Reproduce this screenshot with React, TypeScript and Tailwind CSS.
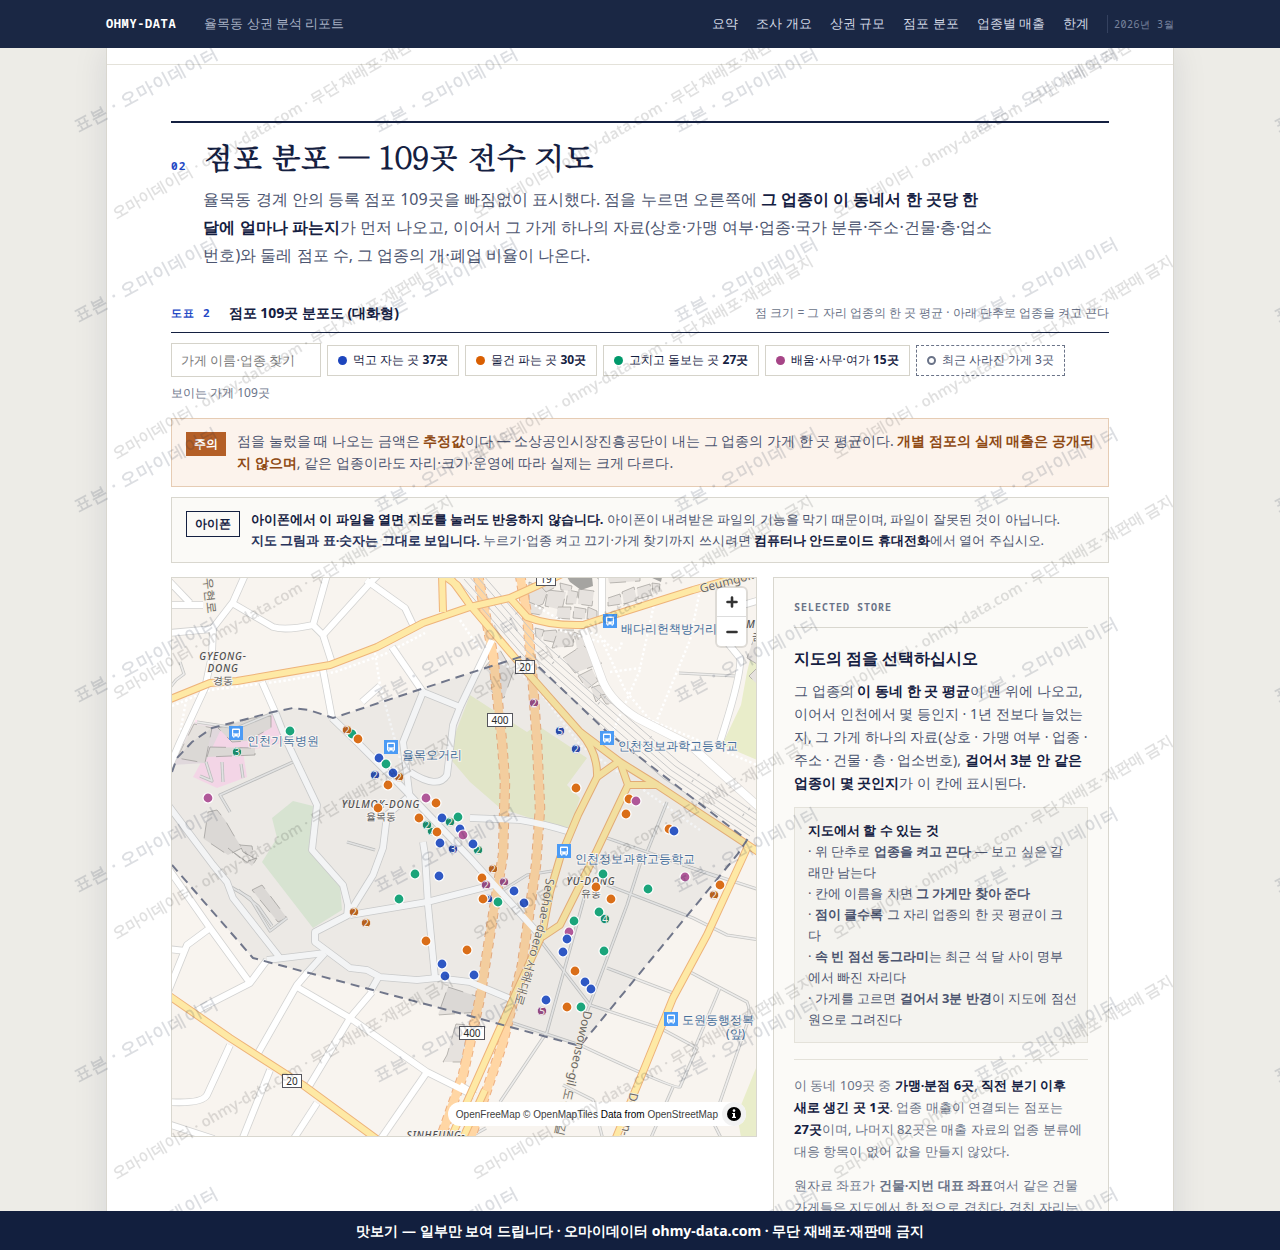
import React, { useState } from "react";

const sans = "font-['Noto_Sans',sans-serif]";
const serif = "font-['Batang','Noto_Serif',serif]";
const mono = "font-['Noto_Sans_Mono','DejaVu_Sans_Mono',monospace]";

const nav = [
  { label: "요약", href: "#summary" },
  { label: "조사 개요", href: "#overview" },
  { label: "상권 규모", href: "#scale" },
  { label: "점포 분포", href: "#map" },
  { label: "업종별 매출", href: "#sales" },
  { label: "한계", href: "#limits" },
];

const groups = [
  { key: "b", label: "먹고 자는 곳", count: "37곳", dot: "bg-[#1d45bd]" },
  { key: "o", label: "물건 파는 곳", count: "30곳", dot: "bg-[#d95f02]" },
  { key: "g", label: "고치고 돌보는 곳", count: "27곳", dot: "bg-[#00996b]" },
  { key: "p", label: "배움·사무·여가", count: "15곳", dot: "bg-[#a64587]" },
];

const dotColor: Record<string, string> = {
  b: "#2f58c4",
  o: "#da6e18",
  g: "#1ba57b",
  p: "#b05899",
};

const clusterColor: Record<string, string> = {
  b: "#2b4aa8",
  o: "#b7611d",
  g: "#1a8a68",
  p: "#934a80",
};

// [group, x, y, stores at the same spot]
const stores: [string, number, number, number?][] = [
  ["g", 352, 734], ["o", 347, 730, 2], ["o", 358, 739], ["g", 290, 731], ["g", 237, 752, 3],
  ["b", 379, 758], ["g", 386, 764], ["o", 399, 777, 2], ["b", 393, 773], ["b", 375, 775, 2],
  ["o", 388, 785], ["p", 208, 798], ["p", 426, 798], ["o", 436, 803], ["o", 378, 808],
  ["o", 419, 818], ["b", 442, 818], ["g", 458, 817], ["g", 450, 822, 2], ["g", 432, 831, 2],
  ["g", 427, 825, 2], ["o", 437, 832], ["b", 460, 829], ["p", 463, 835], ["b", 440, 843],
  ["b", 453, 849, 3], ["p", 534, 703, 2], ["b", 560, 731, 5], ["b", 576, 749, 2], ["o", 576, 788],
  ["o", 629, 799], ["p", 636, 801], ["o", 626, 814], ["o", 669, 829], ["b", 674, 831],
  ["g", 478, 850, 2], ["b", 473, 844], ["g", 415, 874], ["b", 439, 876], ["g", 399, 899],
  ["o", 354, 912, 2], ["o", 366, 923, 2], ["o", 426, 941], ["o", 467, 950], ["b", 442, 964],
  ["b", 445, 976], ["o", 493, 869, 2], ["o", 482, 878], ["p", 486, 885, 2], ["p", 504, 882, 2],
  ["b", 514, 891], ["b", 488, 899, 2], ["o", 483, 899], ["g", 498, 902], ["b", 524, 903],
  ["b", 474, 975], ["g", 603, 874], ["o", 596, 887], ["o", 611, 899], ["g", 599, 912],
  ["g", 605, 919, 4], ["g", 648, 889], ["p", 685, 877], ["o", 720, 885], ["o", 714, 895, 2],
  ["g", 574, 921], ["p", 569, 932], ["b", 567, 939], ["b", 563, 952], ["g", 604, 951],
  ["o", 575, 971], ["b", 585, 982], ["b", 591, 989], ["b", 546, 1000], ["p", 542, 1011, 5],
  ["o", 567, 1007], ["g", 581, 1007],
];

const boundary =
  "M172 772 L177 758 L192 742 L212 728 L273 712 L293 708 L309 710 L333 718 L470 673 L523 656 L540 668 L607 732 L747 840 L737 855 L580 1046 L470 1016 L253 958 L172 865";

const whiteRoads = [
  "M245 575 L233 602 L213 628 L212 655 L205 688 L180 742 L168 770",
  "M232 603 L273 627 Q285 631 313 625 L327 575",
  "M313 625 L323 635 L332 663",
  "M323 635 L370 583 L378 575",
  "M366 580 L405 608 L414 627",
  "M168 605 L203 605",
  "M168 580 L190 603",
  "M168 633 L213 629",
  "M323 670 L332 718",
  "M262 682 L276 714",
  "M392 647 L423 692",
  "M362 702 L380 686",
  "M168 868 L210 928 L250 983",
  "M210 928 L187 945 L168 992",
  "M168 949 L186 951",
  "M267 960 L250 983 L207 1005 L193 1013",
  "M308 972 L297 985 L257 1055",
  "M297 987 L350 1018 L427 1072 L475 1096",
  "M372 992 L350 1018 L308 1088",
  "M317 1103 L293 1140",
  "M427 1072 L380 1140",
  "M230 1045 L207 1095 Q202 1104 168 1102",
  "M270 1070 L242 1140",
  "M168 1124 L214 1139",
  "M602 575 L602 620",
  "M727 642 L740 658 Q742 674 720 742",
  "M719 612 L760 600",
  "M460 1085 L468 1090",
];

const innerRoads = [
  "M332 718 L357 742 L403 788 L470 858 L537 932",
  "M276 714 L287 742 L317 805 L312 850 L343 885 L348 905 L347 917",
  "M423 692 L460 707 L492 640",
  "M460 707 L453 725 L447 775 Q438 790 410 772",
  "M423 692 L403 742 L410 800",
  "M407 798 L387 815 L383 848 L373 875 L350 912",
  "M168 805 L213 865 L227 882 L233 898 L280 958",
  "M350 915 L427 902 L493 885",
  "M423 842 L425 855 L428 905 L435 978",
  "M348 915 L315 932 L315 942 L350 968 L367 970 L380 977 L417 980 L437 978 L470 982 L513 1000",
  "M325 953 L267 960",
  "M325 953 L306 974",
  "M378 978 L370 992",
  "M470 818 L520 820 Q545 824 570 832",
];

const yellowRoads = [
  "M168 700 L210 683 L237 681 L330 665 L377 647 L423 623 L470 607 L510 598 L543 583 L562 574",
  "M510 598 L527 617 Q550 626 583 625 L620 613 L693 590 L760 571",
  "M436 570 L457 585 L470 605 L527 672 L580 732 L620 762 L657 785 L760 853",
  "M442 575 L443 612",
  "M448 575 L468 602",
  "M580 732 Q598 752 597 777 L578 815 L560 858 L550 892 L542 935 L500 1028 L450 1140",
  "M620 762 L628 785 L590 865 L560 925 L542 937",
  "M628 785 L657 785",
  "M597 777 L618 762",
  "M747 848 L743 857 L707 935 L673 998 L647 1062 L615 1140",
  "M168 995 L230 1038 L303 1085 L378 1140",
  "M485 1090 L462 1140",
];

const tunnels = [
  "M478 575 L493 655 L502 742 L505 782 L503 855 L493 915 L480 998 L463 1075 L440 1140",
  "M520 575 L527 615 L533 685 L537 742 L540 808 L536 865 L522 965 L503 1042 L470 1140",
];

const lanes = [
  "M585 895 L547 1032 L500 1102",
  "M643 855 L627 905 L587 1012",
  "M540 940 L590 1005 L660 1028 L697 1048 L680 1087 Q676 1090 580 1045 L510 1022",
  "M607 885 L693 918 L727 935 L760 940",
  "M683 865 L760 890",
  "M607 968 L673 993",
  "M690 972 L747 1002 Q752 1012 745 1030 L713 1122 L722 1140",
  "M720 988 L693 1052",
  "M673 1087 L650 1140",
  "M563 1085 L593 1100 L603 1140",
  "M607 838 L647 852 L667 802",
  "M647 852 L720 878",
  "M293 762 L220 795 L230 812",
  "M197 722 L237 728 L273 713",
  "M168 690 L176 680 L184 674 L180 662",
  "M231 887 L250 898 L270 931 L287 918",
  "M238 890 L258 906 L272 926",
  "M347 842 L375 850",
  "M500 892 L527 875 L552 871",
  "M679 673 L735 676",
  "M470 1137 L486 1128",
  "M200 776 L212 781 L206 762",
  "M223 782 L222 762",
  "M243 778 L241 764",
];

const paths = [
  "M172 706 L210 690 L283 681 L335 672 L385 654 L425 633",
  "M375 653 L380 685 L390 722 L410 795",
  "M604 640 Q620 660 622 640 M610 672 L640 668 L655 600 M640 670 L610 738",
  "M700 590 L690 640 L655 725",
  "M535 605 Q560 622 600 636 L625 690 L650 720 L757 765",
  "M520 665 L580 745 L700 830",
  "M460 620 L480 650 L530 680",
  "M188 690 L176 755",
  "M560 630 L600 642",
];

const avenue = "M583 628 L603 682 Q612 702 637 718 L690 745 L760 808";

const rail = "M470 573 L533 645 L620 722 L673 768 L760 826";

const buildings = [
  "529,582 548,590 543,604 529,610",
  "548,590 566,592 562,610 545,606",
  "568,590 578,592 576,604 566,604",
  "579,589 594,591 592,606 578,604",
  "529,602 544,608 541,615 529,613",
  "558,607 571,607 570,619 556,618",
  "574,607 586,609 585,619 573,618",
  "588,607 597,611 597,618 587,619",
  "538,583 550,579 556,587 546,592",
  "560,583 572,586 571,591 561,590",
  "608,577 640,577 640,581 609,583",
  "608,598 620,594 622,604 608,606",
  "622,592 634,587 637,600 624,604",
  "637,588 650,584 652,595 638,599",
  "652,583 660,584 659,592 653,594",
  "535,628 544,630 541,640 536,637",
  "544,631 556,630 560,640 558,643 543,640",
  "558,630 574,630 573,646 552,648",
  "574,632 583,636 593,646 577,649",
  "563,658 583,645 602,663 575,673",
  "578,676 592,669 598,681 587,689",
  "591,688 599,685 606,692 596,702",
  "600,695 608,694 614,704 606,704",
  "484,668 500,650 513,672 504,698 490,691 497,680",
  "757,630 747,658 757,664",
  "757,668 749,676 757,684",
  "177,758 194,724 212,728 205,763",
  "218,728 252,718 271,716 271,728 247,741 232,742",
  "210,747 255,748 255,755 207,757",
  "208,812 217,810 225,820 233,834 242,848 228,855 204,839",
  "240,845 252,846 254,858 243,852",
  "228,848 245,862 257,858 252,866",
  "252,890 262,885 287,918 278,922",
  "448,987 482,998 480,1012 438,1015",
  "456,1024 447,1055 443,1062 462,1062 468,1025",
];

const darkBuildings = [
  "567,577 592,577 593,586 581,590 570,582",
  "596,577 603,577 602,583",
  "650,577 662,577 661,582",
];

const stops = [
  { x: 236, y: 733, label: "인천기독병원", lx: 247, ly: 745 },
  { x: 391, y: 747, label: "율목오거리", lx: 402, ly: 759 },
  { x: 610, y: 621, label: "배다리헌책방거리", lx: 621, ly: 633 },
  { x: 607, y: 738, label: "인천정보과학고등학교", lx: 618, ly: 750 },
  { x: 564, y: 851, label: "인천정보과학고등학교", lx: 575, ly: 863 },
  { x: 671, y: 1019, label: "도원동행정복", lx: 682, ly: 1024 },
];

const shields = [
  { x: 546, y: 579, w: 19, label: "19" },
  { x: 525, y: 667, w: 19, label: "20" },
  { x: 500, y: 720, w: 25, label: "400" },
  { x: 472, y: 1033, w: 25, label: "400" },
  { x: 292, y: 1081, w: 19, label: "20" },
];

function Strokes({ list, color, width, dash }: { list: string[]; color: string; width: number; dash?: string }) {
  return (
    <g fill="none" stroke={color} strokeWidth={width} strokeDasharray={dash} strokeLinejoin="round">
      {list.map((d) => (
        <path key={d} d={d} />
      ))}
    </g>
  );
}

function StoreMap() {
  return (
    <svg
      viewBox="172 578 584 558"
      preserveAspectRatio="xMidYMid slice"
      className={`block h-[558px] w-full bg-[#f8f4ef] ${sans}`}
      role="img"
      aria-label="점포 109곳 분포도"
    >
      <g fill="#e9edca">
        <polygon points="757,632 747,672 741,705 722,745 757,760" />
        <polygon points="756,1068 737,1115 741,1137 757,1137" />
      </g>
      <polygon fill="#ecf0d0" points="470,695 447,755 470,782 500,808 530,818 570,828 580,798 567,785 587,758 537,725 527,732" />
      <polygon fill="#e2eeda" points="272,818 293,801 313,806 310,848 340,885 342,910 313,928 262,862 277,838" />
      <polygon fill="#ffdff0" points="195,720 225,727 275,713 286,742 243,752 247,777 217,788 193,777 204,757" />
      <polygon fill="#ebe2e5" points="172,765 194,722 222,727 205,763" />

      <g fill="#e6e2de" stroke="#a19e9a" strokeWidth="0.7" strokeDasharray="16 9">
        {buildings.map((p) => (
          <polygon key={p} points={p} />
        ))}
      </g>
      <g fill="#a5a4a1">
        {darkBuildings.map((p) => (
          <polygon key={p} points={p} />
        ))}
      </g>

      <Strokes list={paths} color="#ffffff" width={2.4} dash="2.4 2.4" />
      <Strokes list={lanes} color="#c6c6c4" width={3.2} />
      <Strokes list={lanes} color="#edeceb" width={1.6} />

      <Strokes list={[avenue]} color="#dddbd8" width={9} />
      <Strokes list={[avenue]} color="#ffffff" width={7.6} />
      <Strokes list={[...whiteRoads, ...innerRoads]} color="#d3d3d2" width={7.6} />
      <Strokes list={tunnels} color="#eeb183" width={10.5} dash="6 4" />
      <Strokes list={tunnels} color="#ffd6a4" width={8.5} />
      <Strokes list={innerRoads} color="#ffffff" width={6} />
      <Strokes list={whiteRoads} color="#ffffff" width={6} />

      <g fill="none" stroke="#c9c9c9" strokeWidth="1">
        {[-10, -6, -2, 2, 6].map((dx) => (
          <path key={dx} d={rail} transform={`translate(${dx} ${-dx})`} />
        ))}
      </g>
      <g fill="none" stroke="#c0c0c0" strokeWidth="3" strokeDasharray="1 60">
        <path d={rail} />
        <path d={rail} transform="translate(6 -6)" />
      </g>

      <Strokes list={yellowRoads} color="#eeb37a" width={8} />
      <Strokes list={yellowRoads} color="#fee9a5" width={6} />

      <path d={`${boundary} Z`} fill="#141f3d" fillOpacity="0.05" />
      <path d={boundary} fill="none" stroke="#70768a" strokeWidth="2" strokeDasharray="9 6" />

      {/* place and street names */}
      <g fontSize="10" fill="#505050" stroke="#f6f3f0" strokeWidth="2" paintOrder="stroke" textAnchor="middle">
        <g fontStyle="italic" fontWeight="500" letterSpacing="0.8">
          <text x="223" y="660">GYEONG-</text>
          <text x="223" y="672">DONG</text>
          <text x="381" y="808">YULMOK-DONG</text>
          <text x="591" y="885">YU-DONG</text>
          <text x="436" y="1139">SINHEUNG-</text>
          <text x="755" y="628">MO</text>
        </g>
        <text x="223" y="684">경동</text>
        <text x="381" y="820">율목동</text>
        <text x="591" y="897">유동</text>
        <text x="757" y="640">금</text>
      </g>
      <g fontSize="12" fill="#6b6864" stroke="#f6f0e4" strokeWidth="1.4" paintOrder="stroke">
        <text transform="translate(701 593) rotate(-15)">Geumgok-ro</text>
        <text transform="translate(546 878) rotate(99)">Seohae-</text>
        <text transform="translate(538 924) rotate(106)">daero 서해대로</text>
        <text transform="translate(584 1010) rotate(103)">Dowonseo-gil 도원서길</text>
        <text transform="translate(630 1092) rotate(102)">Dowon-ro</text>
        <text transform="translate(204 578) rotate(84)">우현로</text>
      </g>

      <g fontSize="10" fill="#2b2b2b" textAnchor="middle">
        {shields.map((s) => (
          <g key={`${s.x}-${s.y}`}>
            <rect x={s.x - s.w / 2} y={s.y - 6.5} width={s.w} height="13" fill="#fff" stroke="#55555c" />
            <text x={s.x} y={s.y + 4}>{s.label}</text>
          </g>
        ))}
      </g>

      {stops.map((s) => (
        <g key={`${s.x}-${s.y}`}>
          <g transform={`translate(${s.x - 7} ${s.y - 7})`}>
            <rect width="14" height="14" fill="#4b9bf5" />
            <path d="M3 3.5 Q3 2.5 4 2.5 H10 Q11 2.5 11 3.5 V10.5 H9.8 V11.8 H8.6 V10.5 H5.4 V11.8 H4.2 V10.5 H3 Z" fill="#fff" />
            <rect x="4.2" y="4" width="5.6" height="3.4" fill="#4b9bf5" />
            <rect x="4.2" y="8.5" width="1.2" height="1" fill="#4b9bf5" />
            <rect x="8.6" y="8.5" width="1.2" height="1" fill="#4b9bf5" />
          </g>
          <text x={s.lx} y={s.ly} fontSize="12" fill="#456f9c" stroke="#f8f5f1" strokeWidth="2" paintOrder="stroke">
            {s.label}
          </text>
        </g>
      ))}
      <text x="726" y="1038" fontSize="12" fill="#456f9c" stroke="#f8f5f1" strokeWidth="2" paintOrder="stroke">(앞)</text>

      {stores.map(([group, x, y, count]) => (
        <g key={`${x}-${y}`}>
          <circle cx={x} cy={y} r={count ? 4.6 : 5} fill={count ? clusterColor[group] : dotColor[group]} stroke="#fff" strokeWidth={count ? 0.6 : 1.2} />
          {count && (
            <text x={x} y={y + 4} fontSize="10" fill="#f3efec" textAnchor="middle">{count}</text>
          )}
        </g>
      ))}
    </svg>
  );
}

function Tag({ className, children }: { className: string; children: React.ReactNode }) {
  return <span className={`shrink-0 px-2 text-xs leading-6 font-bold ${className}`}>{children}</span>;
}

export default function App() {
  const [query, setQuery] = useState("");
  const [off, setOff] = useState<string[]>([]);

  const toggle = (key: string) => {
    setOff(off.includes(key) ? off.filter((k) => k !== key) : [...off, key]);
  };

  return (
    <div className={`flex h-screen flex-col bg-[#edece7] text-[#142041] ${sans}`}>
      <header className="shrink-0 bg-[#1a2744]">
        <div className="mx-auto flex h-12 max-w-[1068px] items-center">
          <a href="#top" className={`text-xs font-bold tracking-wider text-white ${mono}`}>OHMY-DATA</a>
          <span className="ml-7 text-[13px] text-[#a9b2c6]">율목동 상권 분석 리포트</span>
          <nav className="ml-auto flex items-center gap-[18px] text-[13px] text-[#d3d9e6]">
            {nav.map((item) => (
              <a key={item.href} href={item.href}>{item.label}</a>
            ))}
            <span className={`border-l border-[#34415f] pl-[6px] text-[10px] leading-[18px] tracking-wider text-[#78839d] ${mono}`}>
              2026년 3월
            </span>
          </nav>
        </div>
      </header>

      <main className="relative min-h-0 flex-1 overflow-hidden">
        <div className="relative mx-auto min-h-full max-w-[1068px] border-x border-[#d9d7cf] bg-white shadow-[0_0_32px_rgba(20,32,65,0.10)]">
          <div className="h-[17px] border-b border-[#e4e2da]" />

          <section id="map" className="px-16 pt-14 pb-16">
            <div className="grid grid-cols-[auto_minmax(0,1fr)] gap-x-[17px] border-t-2 border-[#142041] pt-3">
              <span className={`pt-[21px] text-[11px] leading-5 font-bold tracking-widest text-[#2348c5] ${mono}`}>02</span>
              <div>
                <h2 className={`text-3xl leading-[42px] font-bold tracking-tight ${serif}`}>점포 분포 — 109곳 전수 지도</h2>
                <p className="mt-2 text-base leading-7 text-[#4c5570]">
                  율목동 경계 안의 등록 점포 109곳을 빠짐없이 표시했다. 점을 누르면 오른쪽에{" "}
                  <b className="text-[#142041]">그 업종이 이 동네서 한 곳당 한<br />달에 얼마나 파는지</b>가 먼저 나오고, 이어서 그 가게 하나의 자료(상호·가맹 여부·업종·국가 분류·주소·건물·층·업소
                  <br />
                  번호)와 둘레 점포 수, 그 업종의 개·폐업 비율이 나온다.
                </p>
              </div>
            </div>

            <div className="mt-[33px] flex items-center border-b border-[#142041] pb-2">
              <span className={`text-[11px] font-bold tracking-widest text-[#2348c5] ${mono}`}>도표 2</span>
              <h3 className="ml-[18px] text-sm leading-[22px] font-bold">점포 109곳 분포도 (대화형)</h3>
              <span className="ml-auto text-xs text-[#6a7388]">점 크기 = 그 자리 업종의 한 곳 평균 · 아래 단추로 업종을 켜고 끈다</span>
            </div>

            <div className="mt-[10px] flex flex-wrap items-center gap-[6px]">
              <input
                type="search"
                aria-label="가게 이름·업종 찾기"
                placeholder="가게 이름·업종 찾기"
                value={query}
                onChange={(e) => setQuery(e.target.value)}
                className="h-[34px] w-[150px] border border-[#d5d3ca] px-[9px] text-[13px] placeholder:text-[#7b7b7b]"
              />
              {groups.map((g) => (
                <button
                  key={g.key}
                  type="button"
                  aria-pressed={!off.includes(g.key)}
                  onClick={() => toggle(g.key)}
                  className="flex h-[31px] items-center gap-[6px] border border-[#d5d3ca] bg-white px-[10px] text-xs"
                >
                  <span className={`size-[9px] rounded-full ${g.dot}`} />
                  <span>
                    {g.label} <b>{g.count}</b>
                  </span>
                </button>
              ))}
              <button type="button" className="flex h-[31px] items-center gap-[6px] border border-dashed border-[#6a7388] px-[10px] text-xs text-[#4c5570]">
                <span className="size-[9px] rounded-full border-2 border-[#6a7388]" />
                최근 사라진 가게 3곳
              </button>
            </div>
            <p className="mt-[6px] text-xs leading-5 text-[#6a7388]">보이는 가게 109곳</p>

            <div className="mt-[15px] flex items-start gap-[11px] border border-[#e6ccb4] bg-[#fcf3ec] pt-[11px] pr-2 pb-3 pl-[14px]">
              <Tag className="mt-[2px] bg-[#b45f27] text-white">주의</Tag>
              <p className="text-sm leading-[22px] text-[#4c5570]">
                점을 눌렀을 때 나오는 금액은 <b className="text-[#8f4a14]">추정값</b>이다 — 소상공인시장진흥공단이 내는 그 업종의 가게 한 곳 평균이다.{" "}
                <b className="text-[#8f4a14]">개별 점포의 실제 매출은 공개되<br />지 않으며</b>, 같은 업종이라도 자리·크기·운영에 따라 실제는 크게 다르다.
              </p>
            </div>

            <div className="mt-[10px] flex items-start gap-[11px] border border-[#d9d7cf] bg-[#fbfaf7] py-[11px] pr-2 pl-[14px]">
              <Tag className="mt-[2px] border border-[#142041]">아이폰</Tag>
              <p className="text-[13px] leading-[21px] text-[#4c5570]">
                <b className="text-[#142041]">아이폰에서 이 파일을 열면 지도를 눌러도 반응하지 않습니다.</b> 아이폰이 내려받은 파일의 기능을 막기 때문이며, 파일이 잘못된 것이 아닙니다.
                <br />
                <b className="text-[#27325a]">지도 그림과 표·숫자는 그대로 보입니다.</b> 누르기·업종 켜고 끄기·가게 찾기까지 쓰시려면{" "}
                <b className="text-[#142041]">컴퓨터나 안드로이드 휴대전화</b>에서 열어 주십시오.
              </p>
            </div>

            <div className="mt-[14px] grid grid-cols-[minmax(0,1fr)_336px] gap-4">
              <div className="relative self-start border border-[#d9d7cf]">
                <StoreMap />
                <div className="absolute top-[10px] right-[10px] flex w-[29px] flex-col rounded bg-white shadow-[0_0_0_2px_rgba(0,0,0,0.1)]">
                  <button type="button" aria-label="확대" className="flex h-[29px] items-center justify-center border-b border-[#dddddd]">
                    <svg viewBox="0 0 12 12" className="size-3" fill="none" stroke="#333" strokeWidth="2.6" strokeLinecap="round">
                      <path d="M6 1.5 V10.5 M1.5 6 H10.5" />
                    </svg>
                  </button>
                  <button type="button" aria-label="축소" className="flex h-[29px] items-center justify-center">
                    <svg viewBox="0 0 12 12" className="size-3" fill="none" stroke="#333" strokeWidth="2.6" strokeLinecap="round">
                      <path d="M1.5 6 H10.5" />
                    </svg>
                  </button>
                </div>
                <div className="absolute right-[10px] bottom-[10px] flex h-6 items-center rounded-full bg-white pl-2 font-['Liberation_Sans',sans-serif] text-[10px] text-black">
                  <span>
                    <a href="#openfreemap" className="text-[#404040]">OpenFreeMap</a>{" "}
                    <a href="#openmaptiles" className="text-[#404040]">© OpenMapTiles</a> Data from{" "}
                    <a href="#openstreetmap" className="text-[#404040]">OpenStreetMap</a>
                  </span>
                  <button type="button" aria-label="지도 정보" className="ml-1 flex size-6 items-center justify-center rounded-full bg-[#f2f2f2]">
                    <svg viewBox="0 0 14 14" className="size-[14px]">
                      <circle cx="7" cy="7" r="7" fill="#000" />
                      <circle cx="7" cy="3.6" r="1.3" fill="#fff" />
                      <path d="M5.2 6 H8 V9.8 H9 V11 H5 V9.8 H6 V7.1 H5.2 Z" fill="#fff" />
                    </svg>
                  </button>
                </div>
              </div>

              <aside className="border border-[#d9d7cf] bg-[#fbfaf7] p-5 text-[#4c5570]">
                <p className={`border-b border-[#d9d7cf] pb-[11px] text-[10px] leading-[18px] font-bold tracking-widest text-[#6a7388] ${mono}`}>
                  SELECTED STORE
                </p>
                <h3 className="mt-[17px] text-base leading-[26px] font-bold text-[#142041]">지도의 점을 선택하십시오</h3>
                <p className="mt-2 text-sm leading-[23px]">
                  그 업종의 <b className="text-[#142041]">이 동네 한 곳 평균</b>이 맨 위에 나오고,
                  <br />
                  이어서 인천에서 몇 등인지 · 1년 전보다 늘었는
                  <br />
                  지, 그 가게 하나의 자료(상호 · 가맹 여부 · 업종 ·
                  <br />
                  주소 · 건물 · 층 · 업소번호), <b className="text-[#142041]">걸어서 3분 안 같은<br />업종이 몇 곳인지</b>가 이 칸에 표시된다.
                </p>

                <div className="mt-[13px] border border-[#e4e2da] bg-[#f4f3ef] py-3 pr-1 pl-[13px] text-[13px] leading-[21px]">
                  <b className="text-[#142041]">지도에서 할 수 있는 것</b>
                  <br />· 위 단추로 <b>업종을 켜고 끈다</b> — 보고 싶은 갈
                  <br />래만 남는다
                  <br />· 칸에 이름을 치면 <b>그 가게만 찾아 준다</b>
                  <br />· <b>점이 클수록</b> 그 자리 업종의 한 곳 평균이 크
                  <br />다
                  <br />· <b>속 빈 점선 동그라미</b>는 최근 석 달 사이 명부
                  <br />에서 빠진 자리다
                  <br />· 가게를 고르면 <b>걸어서 3분 반경</b>이 지도에 점선
                  <br />원으로 그려진다
                </div>

                <div className="mt-4 border-t border-[#e4e2da] pt-[14px] text-[13px] leading-[22px] text-[#6a7388]">
                  <p>
                    이 동네 109곳 중 <b className="text-[#142041]">가맹·분점 6곳</b>, <b className="text-[#142041]">직전 분기 이후<br />새로 생긴 곳 1곳</b>. 업종 매출이 연결되는 점포는
                    <br />
                    <b className="text-[#142041]">27곳</b>이며, 나머지 82곳은 매출 자료의 업종 분류에
                    <br />
                    대응 항목이 없어 값을 만들지 않았다.
                  </p>
                  <p className="mt-3">
                    원자료 좌표가 <b>건물·지번 대표 좌표</b>여서 같은 건물
                    <br />
                    가게들은 지도에서 한 점으로 겹친다. 겹친 자리는
                  </p>
                </div>
              </aside>
            </div>
          </section>

          <svg className="pointer-events-none absolute inset-0 size-full" aria-hidden="true">
            <defs>
              <pattern id="notice" y="-40" width="360" height="240" patternUnits="userSpaceOnUse">
                <text transform="translate(9 211) rotate(-30)" fontSize="15" fontWeight="600" fill="#000" fillOpacity="0.12">
                  오마이데이터 · ohmy-data.com · 무단 재배포·재판매 금지
                </text>
              </pattern>
            </defs>
            <rect width="100%" height="100%" fill="url(#notice)" />
          </svg>
        </div>

        <svg className="pointer-events-none absolute inset-0 size-full" aria-hidden="true">
          <defs>
            <pattern id="sample" y="-20" width="300" height="190" patternUnits="userSpaceOnUse">
              <text transform="translate(78 104) rotate(-28)" fontSize="17" fontWeight="700" letterSpacing="1" fill="#141f3d" fillOpacity="0.15">
                표본 · 오마이데이터
              </text>
            </pattern>
          </defs>
          <rect width="100%" height="100%" fill="url(#sample)" />
        </svg>
      </main>

      <footer className="flex h-[39px] shrink-0 items-center justify-center bg-[#121f3e] text-sm font-bold text-white">
        맛보기 — 일부만 보여 드립니다 · 오마이데이터 ohmy-data.com · 무단 재배포·재판매 금지
      </footer>
    </div>
  );
}
